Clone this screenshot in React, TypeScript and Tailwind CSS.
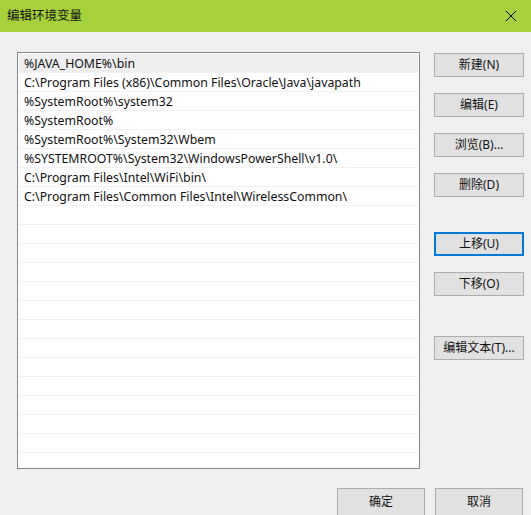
import React from "react";

const paths = [
  "%JAVA_HOME%\\bin",
  "C:\\Program Files (x86)\\Common Files\\Oracle\\Java\\javapath",
  "%SystemRoot%\\system32",
  "%SystemRoot%",
  "%SystemRoot%\\System32\\Wbem",
  "%SYSTEMROOT%\\System32\\WindowsPowerShell\\v1.0\\",
  "C:\\Program Files\\Intel\\WiFi\\bin\\",
  "C:\\Program Files\\Common Files\\Intel\\WirelessCommon\\",
];

const font = { fontFamily: '"Noto Sans", "Noto Sans CJK SC", sans-serif' };

const Btn = ({ children, focused }: { children: React.ReactNode; focused?: boolean }) => (
  <button
    className={
      "h-[24px] w-[90px] text-[12px] leading-none text-[#111] bg-[#e1e1e1] " +
      (focused ? "border-2 border-[#0078d7]" : "border border-[#adadad]")
    }
  >
    {children}
  </button>
);

export default function App() {
  const rows = Array.from({ length: 21 }, (_, i) => paths[i] ?? "");

  return (
    <div className="w-[531px] h-[515px] bg-[#f0f0f0] overflow-hidden flex flex-col" style={font}>
      {/* title bar */}
      <div className="h-[32px] bg-[#a6d13b] flex items-center justify-between pl-[7px] pr-[14px] shrink-0">
        <span className="text-[12.5px] text-[#111]">编辑环境变量</span>
        <svg width="12" height="12" viewBox="0 0 12 12" className="text-black">
          <path d="M1 1L11 11M11 1L1 11" stroke="currentColor" strokeWidth="1" />
        </svg>
      </div>

      <div className="flex pt-[20px] pl-[17px]">
        {/* list */}
        <div className="w-[403px] h-[417px] border border-[#828790] bg-white p-[1px] overflow-hidden">
          {rows.map((p, i) => (
            <div
              key={i}
              className={
                "h-[19px] pt-[3px] leading-[14px] pl-[5px] text-[12.3px] text-[#111] whitespace-nowrap border-b border-[#f2f2f2] " +
                (i === 0 ? "bg-[#eeeeee]" : "")
              }
            >
              {p}
            </div>
          ))}
        </div>

        {/* side buttons */}
        <div className="flex flex-col pl-[14px] pt-[1px]">
          <div className="flex flex-col gap-[16px]">
            <Btn>新建(N)</Btn>
            <Btn>编辑(E)</Btn>
            <Btn>浏览(B)...</Btn>
            <Btn>删除(D)</Btn>
          </div>
          <div className="flex flex-col gap-[16px] mt-[35px]">
            <Btn focused>上移(U)</Btn>
            <Btn>下移(O)</Btn>
          </div>
          <div className="mt-[38px]">
            <Btn>编辑文本(T)...</Btn>
          </div>
        </div>
      </div>

      {/* bottom buttons */}
      <div className="flex justify-end gap-[10px] pr-[8px] pt-[19px]">
        <button className="h-[28px] w-[88px] text-[12px] bg-[#e1e1e1] border border-[#adadad] text-[#111]">确定</button>
        <button className="h-[28px] w-[88px] text-[12px] bg-[#e1e1e1] border border-[#adadad] text-[#111]">取消</button>
      </div>
    </div>
  );
}
